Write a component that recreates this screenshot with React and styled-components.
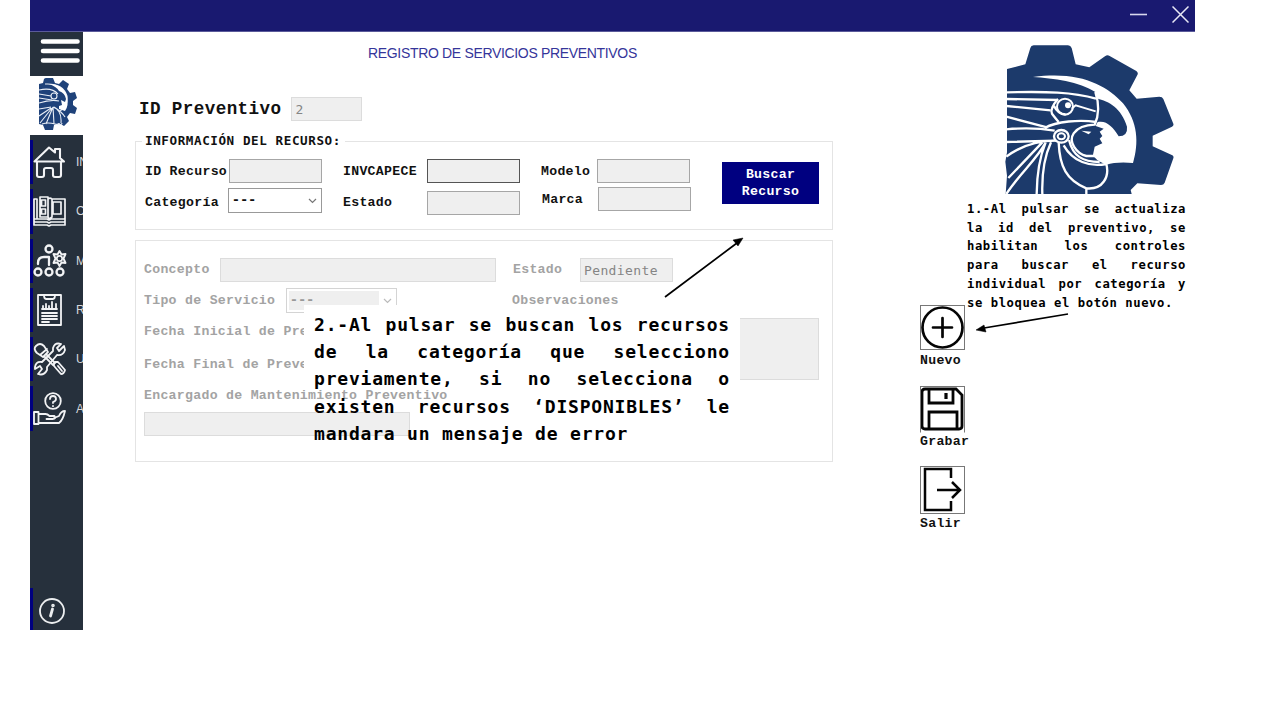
import React from 'react';
import styled, { createGlobalStyle } from 'styled-components';

const Global = createGlobalStyle`
  * { box-sizing: border-box; }
  body { margin: 0; background: #fff; overflow: hidden; }
  svg { display: block; }
`;

const mono = `'DejaVu Sans Mono', 'Liberation Mono', monospace`;
const wideMono = `'Liberation Mono', 'DejaVu Sans Mono', monospace`;

const Window = styled.div`
  position: relative;
  display: flex;
  flex-direction: column;
  width: 1165px;
  height: 630px;
  margin-left: 30px;
`;

const TitleBar = styled.header`
  display: flex;
  justify-content: flex-end;
  align-items: flex-start;
  gap: 24px;
  height: 32px;
  padding: 6px 6px 0 0;
  background: #191970;
  border-bottom: 1px solid #5a5a9a;
`;

const Body = styled.div`
  display: flex;
  flex: 1;
`;

const Sidebar = styled.nav`
  display: flex;
  flex-direction: column;
  width: 53px;
  background: #26303c;
`;

const MenuButton = styled.div`
  height: 44px;
  padding: 5px 0 0 10px;
`;

const Brand = styled.div`
  height: 59px;
  padding: 2px 0 0 9px;
  background: #fff;
`;

const NavList = styled.div`
  display: flex;
  flex-direction: column;
  gap: 5px;
  padding-top: 5px;
`;

const NavItem = styled.div`
  display: flex;
  align-items: center;
  height: 44.3px;
  width: 53px;
  overflow: hidden;
  border-left: 3px solid #000080;
  font: 12px 'Liberation Sans', Arial, sans-serif;
  color: #d5d8dc;
  svg { flex: none; }
  span { margin-left: 9px; }
`;

const InfoItem = styled.div`
  display: flex;
  align-items: center;
  height: 42px;
  margin-top: auto;
  padding: 3px 0 0 5px;
  border-left: 3px solid #000080;
`;

const Main = styled.main`
  display: flex;
  flex-direction: column;
  width: 750px;
  padding-left: 52px;
`;

const Title = styled.h1`
  margin: 13px 0 0 233px;
  font: 14px/17px 'Liberation Sans', Arial, sans-serif;
  letter-spacing: -0.33px;
  color: #35359a;
  white-space: nowrap;
`;

const IdRow = styled.div`
  display: flex;
  align-items: center;
  gap: 10px;
  margin: 35px 0 0 4px;
`;

const Label = styled.label`
  flex: none;
  width: ${p => p.$w ? p.$w + 'px' : 'auto'};
  margin-top: ${p => p.$top || 0}px;
  font: bold ${p => p.$size || 13.2}px/16px ${wideMono};
  letter-spacing: ${p => p.$ls ?? 0.29}px;
  color: ${p => (p.$muted ? '#a3a3a3' : '#111')};
  white-space: pre;
`;

const LegendText = styled.span`
  display: block;
  font: bold 12.6px/16px ${mono};
  letter-spacing: 0.58px;
  color: #111;
  white-space: pre;
`;

const Input = styled.div`
  flex: none;
  width: ${p => p.$w || 93}px;
  height: ${p => p.$h || 24}px;
  padding-left: 3px;
  border: 1px solid ${p => p.$border || '#a6a6a6'};
  background: #efefef;
  font: 13px/23px ${mono};
  letter-spacing: 0.38px;
  color: #858585;
`;

const Select = styled.div`
  display: flex;
  align-items: center;
  justify-content: space-between;
  flex: none;
  width: ${p => p.$w || 94}px;
  height: 25px;
  padding: 2px 4px 2px 2px;
  border: 1px solid ${p => (p.$muted ? '#d4d4d4' : '#999')};
  background: #fff;
  font: bold 13px/19px ${mono};
  color: ${p => (p.$muted ? '#999' : '#111')};
`;

const SelectValue = styled.span`
  width: ${p => p.$w || 60}px;
  height: 19px;
  line-height: 18px;
  padding-left: 1px;
  letter-spacing: 0.3px;
  background: ${p => (p.$muted ? '#efefef' : 'transparent')};
`;

const Panel = styled.section`
  width: 698px;
  border: 1px solid #e4e4e4;
`;

const ResourcePanel = styled(Panel)`
  display: flex;
  height: 89px;
  margin-top: 20px;
  padding: 0 13px 0 9px;
`;

const Legend = styled.div`
  height: 16px;
  margin: -9px 0 0 -3px;
  padding-left: 3px;
  width: 203px;
  background: #fff;
`;

const Fields = styled.div`
  display: flex;
  flex-direction: column;
  width: ${p => p.$w}px;
`;

const FieldColumn = styled.div`
  display: flex;
  flex-direction: column;
  gap: ${p => p.$gap}px;
  width: ${p => p.$w}px;
`;

const Columns = styled.div`
  display: flex;
  margin-top: 10px;
`;

const Field = styled.div`
  display: flex;
  align-items: center;
  margin-left: ${p => p.$left || 0}px;
`;

const SearchButton = styled.button`
  width: 97px;
  height: 42px;
  margin-top: 20px;
  padding: 0;
  border: 0;
  background: #000080;
  color: #fff;
  font: bold 13.2px/17px ${wideMono};
  letter-spacing: 0.29px;
`;

const ServicePanel = styled(Panel)`
  display: flex;
  flex-direction: column;
  height: 222px;
  margin-top: 10px;
  padding: 17px 13px 0 8px;
`;

const Row = styled.div`
  display: flex;
  align-items: center;
  height: ${p => p.$h}px;
  margin-top: ${p => p.$top || 0}px;
`;

const SplitRow = styled.div`
  display: flex;
  justify-content: space-between;
  height: 62px;
  margin-top: 5px;
`;

const Dates = styled.div`
  display: flex;
  flex-direction: column;
  gap: 17px;
  padding-top: 6px;
`;

const Aside = styled.aside`
  display: flex;
  flex-direction: column;
  flex: 1;
  padding-left: 87px;
`;

const BigLogo = styled.div`
  margin: 13px 0 0 85px;
  height: 149px;
`;

const Actions = styled.div`
  display: flex;
  flex-direction: column;
  margin-top: 111px;
`;

const Action = styled.div`
  display: flex;
  flex-direction: column;
  gap: ${p => p.$gap ?? 2}px;
  height: ${p => p.$h || 81}px;
`;

const Tile = styled.div`
  width: 45px;
  height: ${p => p.$h || 45}px;
  border: 1px solid #777;
  border-bottom-color: ${p => (p.$open ? 'transparent' : '#777')};
`;

const Note = styled.div`
  position: absolute;
  font-family: ${mono};
  font-weight: bold;
  color: #000;
`;

const StepOne = styled(Note)`
  left: 937px;
  top: 200px;
  width: 219px;
  font-size: 12.2px;
  line-height: 18.7px;
  letter-spacing: 0.58px;
`;

const StepTwo = styled(Note)`
  left: 274px;
  top: 305px;
  width: 436px;
  height: 78px;
  padding: 6px 10px 0;
  background: #fff;
  font-size: 18px;
  line-height: 27.2px;
  letter-spacing: 0.8px;
`;

const NoteLine = styled.div`
  display: flex;
  justify-content: ${p => (p.$last ? 'flex-start' : 'space-between')};
  white-space: pre;
`;

const Arrows = styled.svg`
  position: absolute;
  left: 0;
  top: 0;
  pointer-events: none;
`;

const Icon = ({ children, w = 34, h = 34, sw = 2 }) => (
  <svg width={w} height={h} viewBox={`0 0 ${w} ${h}`} fill="none" stroke="#f2f3f5" strokeWidth={sw} strokeLinejoin="round" strokeLinecap="round">{children}</svg>
);

const HomeIcon = () => (
  <Icon sw={2.1}><path d="M1.500 16.500 16 2.500l6 5V4h5v9l4 3.500ZM4 18v12q0 2 2 2h3q2 0 2-2v-5q0-2 2-2h5q2 0 2 2v5q0 2 2 2h4q2 0 2-2V18" /></Icon>
);
const CatalogIcon = () => (
  <Icon sw={1.7}><path d="M4 5H1v26h13l2 1 2-1h14V5H19M2 28h12l2 1 2-1h13M2 25h12l2 1 2-1h13M4 5v20M7 3h8v20H7ZM15 5q2-2 4 0v18l-3 2-1-2M8.500 6h4v6h-4ZM8.500 15h4v5h-4ZM20 8h8v12h-8Z" /></Icon>
);
const TeamIcon = () => (
  <Icon sw={2.3}><circle cx="16" cy="5" r="3.500" /><circle cx="5" cy="28" r="3.500" /><circle cx="16" cy="28" r="3.500" /><circle cx="27" cy="28" r="3.500" /><path d="M5 20v-1q0-6 6-6h5v8" /><path d="m26.500 7 2 3.500 4-.5-2 4.500 2 4.500-4-.5-2 3.500-2-3.500-4 .5 2-4.500-2-4.500 4 .5Z" strokeWidth="1.9" /><circle cx="26.500" cy="14.500" r="2.700" strokeWidth="1.700" /></Icon>
);
const ReportIcon = () => (
  <Icon sw={1.8}><path d="M5 2h23v30H5ZM11 2q0 4 2 4h7q2 0 2-4M9 16h15M10 16v-3M13 16v-5M16 16v-3M19 16V9M23 16v-5M9 20h15M9 23h15M9 26h15M9 29h7" /></Icon>
);
const ToolsIcon = () => (
  <Icon sw={1.8}><path d="M3 4q4-4 8 0l4 6-5 5-6-4q-4-4-1-7ZM7 13l7-6M14 13l8 8M12 15l8 8M22 20l3 0 7 8q-1 4-4 4l-7-8v-3ZM25 24l4 5" /><path d="m31 4-5 5-2-3 4-4q-6-2-8 4v3L9 20q-6-1-7 5v2l5-3 2 3-4 5q6 2 9-4v-3l10-12q6 1 8-5Z" /></Icon>
);
const HelpIcon = () => (
  <Icon sw={1.8}><circle cx="20" cy="9" r="7.8" /><path d="M17 7q0-3 3-3t3 3q0 2-3 3v1M20 14v.2M1 20h4.500v12H1ZM5.500 22h7q2 0 4 2h5q2 3-2 3h-6M21 26l5-2q2-5 6-5-2 9-6 12H5.500" /></Icon>
);

const navItems = [
  [HomeIcon, 'IN'], [CatalogIcon, 'C'], [TeamIcon, 'M'],
  [ReportIcon, 'R'], [ToolsIcon, 'U'], [HelpIcon, 'A'],
];

const Feathers = () => (
  <g fill="none" stroke="#fff" strokeWidth="7">
    <path d="M50 187C170 184 250 186 319 206M50 207 205 210M50 228 183 241M50 260 172 292M50 298C110 292 160 296 195 302M165 294C200 274 270 268 320 276M50 336 195 332M50 380C90 350 140 332 200 332M56 444 158 337M50 492C90 430 140 390 168 338M141 492Q142 400 168 337" />
    <path d="M158 492Q155 400 184 337" />
    <path d="M207 338C210 410 230 450 290 475C340 480 360 440 350 402M222 346C250 395 300 412 350 402M238 330C250 380 280 395 330 396M290 475v18" />
    <path d="M317 186Q335 240 315 284Q270 285 252 310C235 335 260 370 290 378L320 378" />
    <path d="M205 207Q180 235 187 251Q200 268 207 276M193 228Q205 253 228 253" />
  </g>
);

const Head = () => (
  <>
    <path fill="#fff" d="M130 141C270 122 350 165 400 220C445 275 448 340 430 399Q380 395 350 404Q315 390 310 374L315 350 338 340 330 326 338 318 330 305 342 296 318 288 324 276C350 270 370 290 387 319Q415 318 412 290C395 235 360 215 320 205L317 186C270 155 190 145 130 141Z" />
    <Feathers />
    <circle cx="226" cy="230" r="24" fill="none" stroke="#fff" strokeWidth="6" />
    <circle cx="235" cy="226" r="9" fill="#fff" />
    <path d="m246 236 12-10 60 18" fill="none" stroke="#fff" strokeWidth="6" />
    <path d="m275 302 30 3-8 8Z" fill="#fff" />
    <ellipse cx="215" cy="319" rx="22" ry="19" fill="#1c3a6b" stroke="#fff" strokeWidth="7" />
    <ellipse cx="215" cy="319" rx="11" ry="9" fill="none" stroke="#fff" strokeWidth="6" />
  </>
);

const EagleLogo = () => (
  <svg width="169" height="149" viewBox="46 45 507 447">
    <path fill="#1c3a6b" d="M52 117 107 103 122 54Q124 46 132 46H235Q243 46 246 54L258 103 299 112 346 79Q353 73 360 78L440 123Q447 128 443 135L419 181 441 206 509 200Q518 200 521 207L551 281Q553 287 547 290L489 317V349L548 376Q553 379 551 385L525 458Q522 465 514 465L443 460 423 480 426 492H48L52 437 47 395 52 367Z" />
    <Head />
  </svg>
);

const SmallLogo = () => (
  <svg width="39" height="53" viewBox="0 0 39 53">
    <path fill="#1f427a" d="M0 6 4 5 5 1Q6 0 7 0H14L16 5 20 6 24 2 30 6 28 11 31 15 36 14 38 20 34 23V27L38 30 36 36 31 35 28 39 30 43 25 48 20 45 15 47 14 52H6L4 47 0 46Z" />
    <g fill="none" stroke="#e9eef6" strokeWidth="1.1">
      <path d="M6 6Q24 5 28 18Q29 29 21 33M0 12q13-3 19 4M0 16l12 2M0 20l13 2M0 25q12-4 20-2M0 31l12-2M0 38l12-8M1 45l12-15M7 46l7-17M14 29l1 17M14 29q9 3 8 16M15 29q8 5 11 10M3 46q6-2 13 0t7-1" />
      <circle cx="15" cy="18" r="3" />
    </g>
    <path fill="#fff" d="M10 6Q24 6 28 18Q30 28 26 33L20 31 20 28 23 27 22 22 26 24 27 21Q26 15 20 13Q18 9 10 6Z" />
  </svg>
);

const PlusIcon = () => (
  <svg width="43" height="43" viewBox="0 0 43 43" fill="none" stroke="#050505" strokeWidth="2.7" strokeLinecap="round"><circle cx="21.5" cy="21.5" r="20" /><path d="M21.500 12v19M12 21.500h19" /></svg>
);
const SaveIcon = () => (
  <svg width="43" height="45" viewBox="0 0 43 45" fill="none" stroke="#050505" strokeWidth="2.8"><path d="M4 2h31l6 6v31q0 3-3 3H4q-3 0-3-3V5q0-3 3-3ZM8 2v14h24V2M8 42V25h28v17" /><path d="M25 6v6" strokeWidth="3.2" /></svg>
);
const ExitIcon = () => (
  <svg width="43" height="46" viewBox="0 0 43 46" fill="none" stroke="#050505" strokeWidth="2.5"><path d="M30 11V2H4v41h26v-9M16 23h23M31 15l8 8-8 8" /></svg>
);

const Chevron = ({ color = '#777' }) => (
  <svg width="9" height="6" viewBox="0 0 9 6" fill="none" stroke={color} strokeWidth="1.2"><path d="m1 1 3.500 3.500L8 1" /></svg>
);

const noteOne = ['1.-Al pulsar se actualiza', 'la id del preventivo, se', 'habilitan los controles', 'para buscar el recurso', 'individual por categoría y', 'se bloquea el botón nuevo.'];
const noteTwo = ['2.-Al pulsar se buscan los recursos', 'de la categoría que selecciono', 'previamente, si no selecciona o', 'existen recursos ‘DISPONIBLES’ le', 'mandara un mensaje de error'];

const Justified = ({ lines }) => lines.map((line, i) => {
  const last = i === lines.length - 1;
  return (
    <NoteLine key={line} $last={last}>
      {last ? line : line.split(' ').map((word, j) => <span key={j}>{word}</span>)}
    </NoteLine>
  );
});

export default function App() {
  return (
    <>
      <Global />
      <Window>
        <TitleBar>
          <svg width="18" height="17" viewBox="0 0 18 17" stroke="#d8d8ee" strokeWidth="1.6"><path d="M0 8.500h17" /></svg>
          <svg width="17" height="17" viewBox="0 0 17 17" stroke="#e8e8f5" strokeWidth="1.5"><path d="m.5.5 16 16M16.500.5l-16 16" /></svg>
        </TitleBar>
        <Body>
          <Sidebar>
            <MenuButton>
              <svg width="40" height="28" viewBox="0 0 40 28" stroke="#fff" strokeWidth="4.600" strokeLinecap="round"><path d="M3 4.500h34.500M3 14h34.500M3 23.500h34.500" /></svg>
            </MenuButton>
            <Brand><SmallLogo /></Brand>
            <NavList>
              {navItems.map(([Glyph, name]) => <NavItem key={name}><Glyph /><span>{name}</span></NavItem>)}
            </NavList>
            <InfoItem>
              <svg width="28" height="28" viewBox="0 0 28 28" fill="none" stroke="#eceef0" strokeLinecap="round"><circle cx="14" cy="14" r="12" strokeWidth="1.8" /><path d="m14.500 12-2 7" strokeWidth="2.800" /><circle cx="15" cy="8.500" r="1" strokeWidth="1.600" /></svg>
            </InfoItem>
          </Sidebar>
          <Main>
            <Title>REGISTRO DE SERVICIOS PREVENTIVOS</Title>
            <IdRow>
              <Label $size={17.6} $ls={0.4} $top={-1}>ID Preventivo</Label>
              <Input $w={71} $border="#dcdcdc">2</Input>
            </IdRow>
            <ResourcePanel>
              <Fields $w={577}>
                <Legend><LegendText>INFORMACIÓN DEL RECURSO:</LegendText></Legend>
                <Columns>
                  <FieldColumn $w={198} $gap={5}>
                    <Field><Label $w={84} $top={2}>ID Recurso</Label><Input /></Field>
                    <Field><Label $w={83} $top={4}>Categoría</Label><Select><SelectValue>---</SelectValue><Chevron /></Select></Field>
                  </FieldColumn>
                  <FieldColumn $w={198} $gap={8}>
                    <Field><Label $w={84} $top={2}>INVCAPECE</Label><Input $border="#555" /></Field>
                    <Field><Label $w={84}>Estado</Label><Input /></Field>
                  </FieldColumn>
                  <FieldColumn $w={160} $gap={4}>
                    <Field><Label $w={56} $top={2}>Modelo</Label><Input /></Field>
                    <Field $left={1}><Label $w={56} $top={2}>Marca</Label><Input /></Field>
                  </FieldColumn>
                </Columns>
              </Fields>
              <SearchButton>Buscar<br />Recurso</SearchButton>
            </ResourcePanel>
            <ServicePanel>
              <Row $h={24}>
                <Label $muted $w={76}>Concepto</Label><Input $w={276} $border="#dcdcdc" />
                <Field $left={17}><Label $muted $w={67}>Estado</Label><Input $border="#dcdcdc">Pendiente</Input></Field>
              </Row>
              <Row $h={25} $top={6}>
                <Label $muted $w={142}>Tipo de Servicio</Label>
                <Select $w={111} $muted><SelectValue $muted $w={90}>---</SelectValue><Chevron color="#bbb" /></Select>
                <Field $left={115}><Label $muted>Observaciones</Label></Field>
              </Row>
              <SplitRow>
                <Dates>
                  <Label $muted>Fecha Inicial de Pre</Label>
                  <Label $muted>Fecha Final de Preve</Label>
                </Dates>
                <Input $w={306} $h={62} $border="#dcdcdc" />
              </SplitRow>
              <Row $h={16} $top={8}><Label $muted>Encargado de Mantenimiento Preventivo</Label></Row>
              <Row $h={24} $top={8}><Input $w={266} $border="#dcdcdc" /></Row>
            </ServicePanel>
          </Main>
          <Aside>
            <BigLogo><EagleLogo /></BigLogo>
            <Actions>
              <Action $gap={3}><Tile><PlusIcon /></Tile><Label>Nuevo</Label></Action>
              <Action $h={80} $gap={1}><Tile $h={47} $open><SaveIcon /></Tile><Label>Grabar</Label></Action>
              <Action><Tile $h={48}><ExitIcon /></Tile><Label>Salir</Label></Action>
            </Actions>
          </Aside>
        </Body>
        <StepOne><Justified lines={noteOne} /></StepOne>
        <StepTwo><Justified lines={noteTwo} /></StepTwo>
        <Arrows width="1165" height="630" viewBox="30 0 1165 630" stroke="#000" strokeWidth="1.7">
          <path d="M665 297 737 243M1068 314 984 328" />
          <path d="m743 238-5 8-5-6ZM976 330l8-5 2 7Z" strokeWidth="0.5" />
        </Arrows>
      </Window>
    </>
  );
}
